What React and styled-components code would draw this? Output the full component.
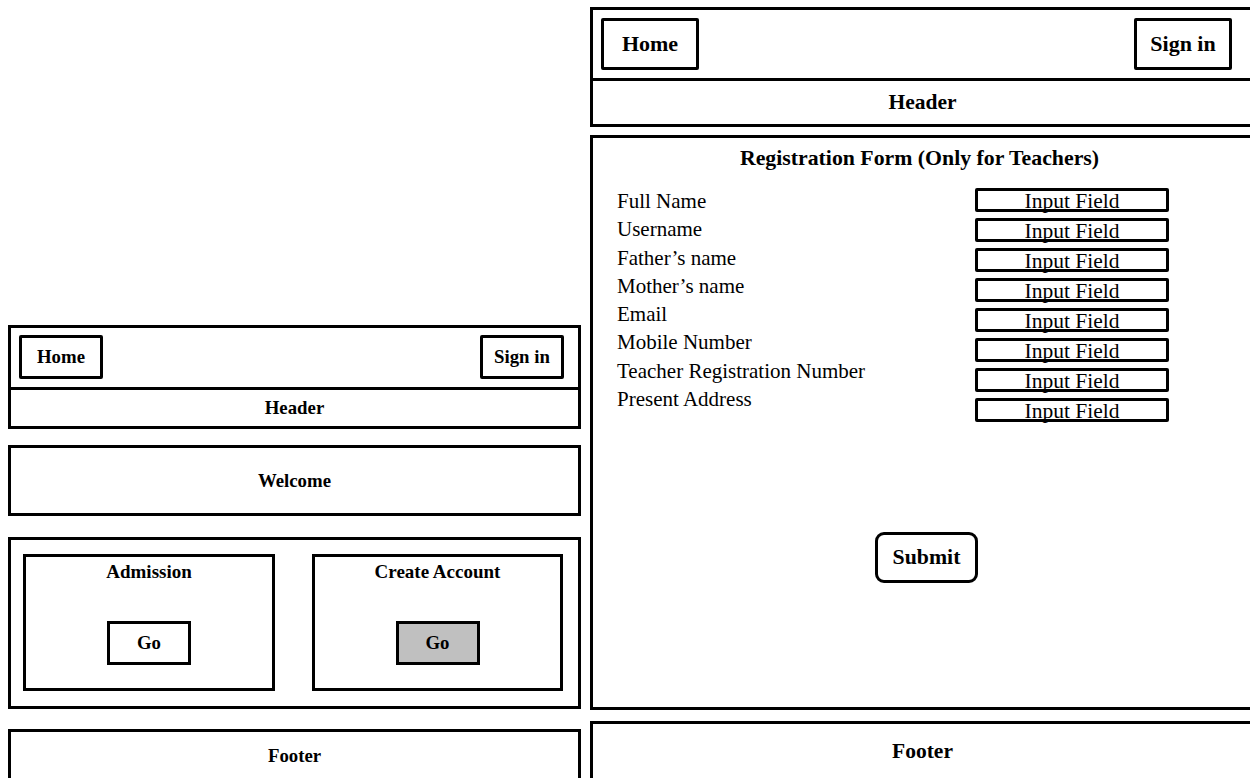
import React from "react";
import styled, { createGlobalStyle } from "styled-components";

const Global = createGlobalStyle`
  html, body { margin: 0; padding: 0; background: #fff; }
  body {
    width: 1250px;
    height: 778px;
    overflow: hidden;
    font-family: "Liberation Serif", "DejaVu Serif", serif;
    color: #000;
  }
`;

const Page = styled.div`
  display: grid;
  grid-template-columns: 573px 665px;
  column-gap: 9px;
  padding: 7px 0 0 8px;
  align-items: start;
`;

const Column = styled.div`
  display: flex;
  flex-direction: column;
  margin-top: ${(p) => p.$offset || 0}px;
`;

const Frame = styled.div`
  border: 3px solid #000;
  box-sizing: border-box;
  background: #fff;
`;

const NavBar = styled.div`
  display: flex;
  justify-content: space-between;
  align-items: center;
  padding: ${(p) => (p.$big ? "8px 20px 8px 8px" : "7px 14px 8px 8px")};
  border-bottom: 3px solid #000;
`;

const NavButton = styled.div`
  box-sizing: border-box;
  width: ${(p) => (p.$big ? 98 : 84)}px;
  height: ${(p) => (p.$big ? 52 : 44)}px;
  border: 3px solid #000;
  border-radius: 2px;
  display: flex;
  align-items: center;
  justify-content: center;
  font-weight: bold;
  font-size: ${(p) => (p.$big ? 22 : 18.8)}px;
`;

const HeaderRow = styled.div`
  height: ${(p) => (p.$big ? 43 : 36)}px;
  display: flex;
  align-items: center;
  justify-content: center;
  font-weight: bold;
  font-size: ${(p) => (p.$big ? 21.5 : 18.8)}px;
`;

const WelcomeBox = styled(Frame)`
  margin-top: 16px;
  height: 71px;
  display: flex;
  align-items: center;
  justify-content: center;
  font-weight: bold;
  font-size: 18.8px;
`;

const CardsBox = styled(Frame)`
  margin-top: 21px;
  height: 172px;
  display: grid;
  grid-template-columns: 252px 251px;
  column-gap: 37px;
  padding: 14px 14px 15px 12px;
`;

const Card = styled.div`
  border: 3px solid #000;
  display: flex;
  flex-direction: column;
  align-items: center;
`;

const CardTitle = styled.div`
  font-weight: bold;
  font-size: 19px;
  margin-top: 5px;
  height: 20px;
  line-height: 20px;
`;

const GoButton = styled.div`
  box-sizing: border-box;
  width: 84px;
  height: 44px;
  margin-top: 39px;
  border: 3px solid #000;
  background: ${(p) => (p.$filled ? "#c0c0c0" : "#fff")};
  display: flex;
  align-items: center;
  justify-content: center;
  font-weight: bold;
  font-size: 18.8px;
`;

const FooterBox = styled(Frame)`
  margin-top: ${(p) => p.$gap}px;
  height: 90px;
  display: flex;
  justify-content: center;
  padding-top: ${(p) => (p.$big ? 15 : 12)}px;
  line-height: 24px;
  font-weight: bold;
  font-size: ${(p) => (p.$big ? 21.5 : 18.8)}px;
`;

const FormBox = styled(Frame)`
  margin-top: 8px;
  height: 575px;
  display: flex;
  flex-direction: column;
  align-items: center;
`;

const FormTitle = styled.div`
  font-weight: bold;
  font-size: 21.8px;
  margin-top: 8px;
  height: 24px;
  line-height: 24px;
  margin-left: -6px;
`;

const FormGrid = styled.div`
  align-self: stretch;
  display: flex;
  justify-content: space-between;
  padding: 0 83px 0 24px;
  margin-top: 18px;
`;

const LabelList = styled.div`
  display: flex;
  flex-direction: column;
  margin-top: -1px;
`;

const Label = styled.div`
  font-size: 21px;
  line-height: 28.3px;
  height: 28.3px;
  white-space: nowrap;
`;

const FieldList = styled.div`
  display: flex;
  flex-direction: column;
  gap: 6.5px;
`;

const Field = styled.div`
  box-sizing: border-box;
  width: 194px;
  height: 23.5px;
  border: 3px solid #000;
  border-radius: 2px;
  font-size: 21.5px;
  line-height: 20px;
  text-align: center;
  overflow: visible;
  white-space: nowrap;
`;

const SubmitButton = styled.div`
  box-sizing: border-box;
  margin-top: 110px;
  margin-left: 8px;
  width: 103px;
  height: 51px;
  border: 3px solid #000;
  border-radius: 9px;
  display: flex;
  align-items: center;
  justify-content: center;
  font-weight: bold;
  font-size: 21.8px;
`;

const labels = [
  "Full Name",
  "Username",
  "Father’s name",
  "Mother’s name",
  "Email",
  "Mobile Number",
  "Teacher Registration Number",
  "Present Address",
];

export default function App() {
  return (
    <>
      <Global />
      <Page>
        <Column $offset={318}>
          <Frame>
            <NavBar>
              <NavButton>Home</NavButton>
              <NavButton>Sign in</NavButton>
            </NavBar>
            <HeaderRow>Header</HeaderRow>
          </Frame>
          <WelcomeBox>Welcome</WelcomeBox>
          <CardsBox>
            <Card>
              <CardTitle>Admission</CardTitle>
              <GoButton>Go</GoButton>
            </Card>
            <Card>
              <CardTitle>Create Account</CardTitle>
              <GoButton $filled>Go</GoButton>
            </Card>
          </CardsBox>
          <FooterBox $gap={20}>Footer</FooterBox>
        </Column>
        <Column>
          <Frame>
            <NavBar $big>
              <NavButton $big>Home</NavButton>
              <NavButton $big>Sign in</NavButton>
            </NavBar>
            <HeaderRow $big>Header</HeaderRow>
          </Frame>
          <FormBox>
            <FormTitle>Registration Form (Only for Teachers)</FormTitle>
            <FormGrid>
              <LabelList>
                {labels.map((l) => (
                  <Label key={l}>{l}</Label>
                ))}
              </LabelList>
              <FieldList>
                {labels.map((l) => (
                  <Field key={l}>Input Field</Field>
                ))}
              </FieldList>
            </FormGrid>
            <SubmitButton>Submit</SubmitButton>
          </FormBox>
          <FooterBox $gap={11} $big>Footer</FooterBox>
        </Column>
      </Page>
    </>
  );
}
